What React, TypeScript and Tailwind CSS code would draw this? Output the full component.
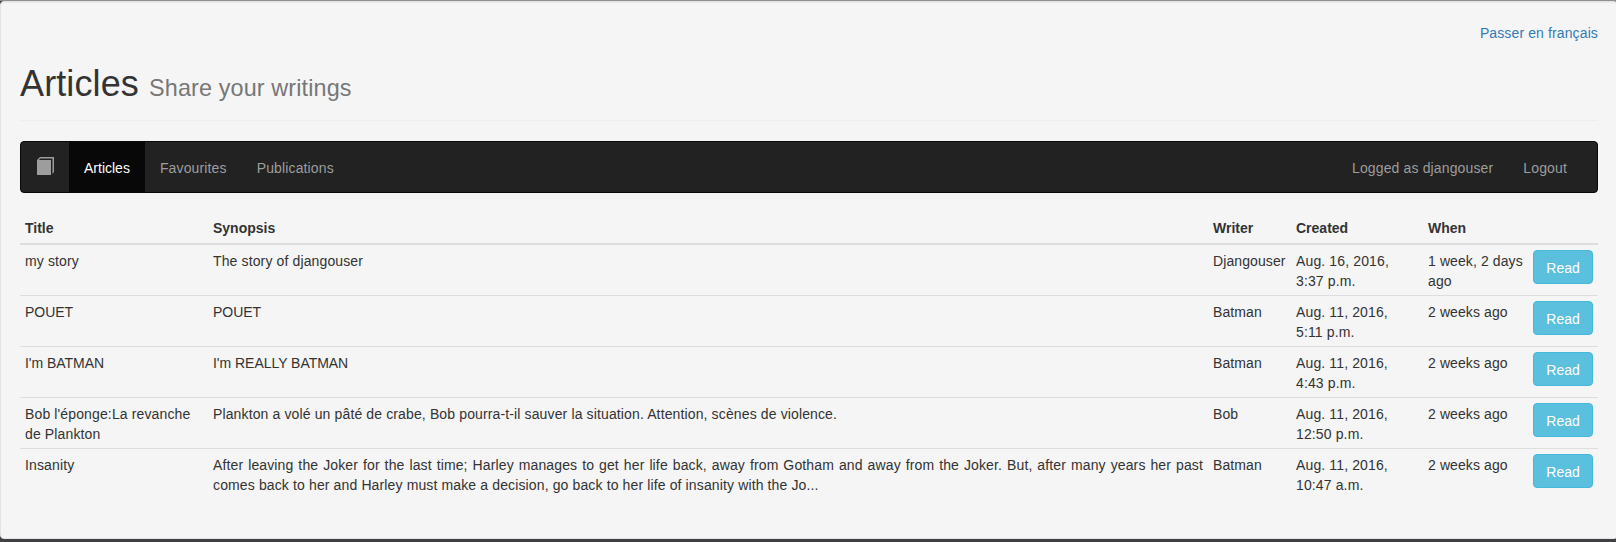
const articles = [
  { title: "my story", synopsis: "The story of djangouser", writer: "Djangouser", created: "Aug. 16, 2016, 3:37 p.m.", when: "1 week, 2 days ago" },
  { title: "POUET", synopsis: "POUET", writer: "Batman", created: "Aug. 11, 2016, 5:11 p.m.", when: "2 weeks ago" },
  { title: "I'm BATMAN", synopsis: "I'm REALLY BATMAN", writer: "Batman", created: "Aug. 11, 2016, 4:43 p.m.", when: "2 weeks ago" },
  { title: "Bob l'éponge:La revanche de Plankton", synopsis: "Plankton a volé un pâté de crabe, Bob pourra-t-il sauver la situation. Attention, scènes de violence.", writer: "Bob", created: "Aug. 11, 2016, 12:50 p.m.", when: "2 weeks ago" },
  { title: "Insanity", synopsis: "After leaving the Joker for the last time; Harley manages to get her life back, away from Gotham and away from the Joker. But, after many years her past comes back to her and Harley must make a decision, go back to her life of insanity with the Jo...", writer: "Batman", created: "Aug. 11, 2016, 10:47 a.m.", when: "2 weeks ago" },
];

// Capitals sit tighter than mixed-case text.
const tracking = (text: string) => (/[A-Z]{4}/.test(text) ? "tracking-[-0.03px]" : "tracking-[0.13px]");

function BookIcon() {
  return (
    <svg width="18" height="18" viewBox="0 0 18 18" fill="#9d9d9d" aria-hidden="true">
      <path d="M4 0H18V15L16.5 17V1.5H4.2L3 3H15V18H1V3Z" />
    </svg>
  );
}

function NavLink({ label, active = false }: { label: string; active?: boolean }) {
  return (
    <a href="#" className={active ? "bg-[#080808] px-[15px] pt-4 pb-[14px] text-white" : "px-[15px] pt-4 pb-[14px] tracking-[0.14px] text-[#9d9d9d]"}>
      {label}
    </a>
  );
}

function Navbar() {
  return (
    <nav className="flex h-[52px] rounded border border-[#080808] bg-[#222]">
      <a href="#" className="flex px-[15px] pt-[15px]">
        <BookIcon />
      </a>
      <NavLink label="Articles" active />
      <NavLink label="Favourites" />
      <NavLink label="Publications" />
      <div className="mr-[15px] ml-auto flex">
        <NavLink label="Logged as djangouser" />
        <NavLink label="Logout" />
      </div>
    </nav>
  );
}

function ArticleTable() {
  return (
    <table className="mt-5 w-full table-fixed border-separate border-spacing-0 text-left">
      <colgroup>
        <col className="w-[188px]" />
        <col />
        <col className="w-[83px]" />
        <col className="w-[132px]" />
        <col className="w-[105px]" />
        <col className="w-[70px]" />
      </colgroup>
      <thead>
        <tr className="*:border-b-2 *:border-[#ddd] *:p-[5px] *:font-bold">
          <th>Title</th>
          <th>Synopsis</th>
          <th>Writer</th>
          <th>Created</th>
          <th>When</th>
          <th></th>
        </tr>
      </thead>
      <tbody>
        {articles.map((a) => (
          <tr key={a.title} className="*:border-t *:border-[#ddd] *:px-[5px] *:pt-1.5 *:pb-1 *:align-top first:*:border-t-0">
            <td className={tracking(a.title)}>{a.title}</td>
            <td className={`text-justify ${tracking(a.synopsis)}`}>{a.synopsis}</td>
            <td className="tracking-[0.1px]">{a.writer}</td>
            <td className="pr-8! tracking-[0.13px]">{a.created}</td>
            <td className="tracking-[0.1px]">{a.when}</td>
            <td className="pt-[5px]!">
              <button className="block h-[34px] w-[60px] rounded border border-[#46b8da] bg-[#5bc0de] pt-0.5 text-white">Read</button>
            </td>
          </tr>
        ))}
      </tbody>
    </table>
  );
}

export default function App() {
  return (
    <div className="h-[542px] overflow-hidden border-t border-[#8f8f91] bg-[#414143] font-['Liberation_Sans',Arial,sans-serif] text-sm/5 text-[#333]">
      <div className="h-[538px] w-[1618px] rounded border border-[#e3e3e3] bg-[#f5f5f5] px-[19px] pt-[21px] shadow-[inset_0_1px_1px_rgba(0,0,0,0.05)]">
        <div className="text-right">
          <a href="#" className="tracking-[0.12px] text-[#337ab7]">Passer en français</a>
        </div>
        <header className="mb-5 h-[78px] border-b border-[#eee] pt-[21px]">
          <h1 className="text-[36px]/[39.6px] font-medium tracking-[0.12px]">
            Articles <small className="text-[23.4px]/none font-normal text-[#777]">Share your writings</small>
          </h1>
        </header>
        <Navbar />
        <ArticleTable />
      </div>
    </div>
  );
}
